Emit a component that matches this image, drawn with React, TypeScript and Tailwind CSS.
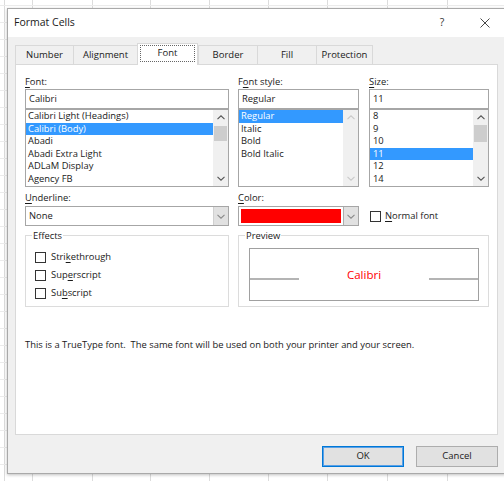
import React from "react";

const F = "font-['Open_Sans',sans-serif]";

function Chev({ down = false, color = "#606060" }: { down?: boolean; color?: string }) {
  return (
    <svg width="8" height="5" viewBox="0 0 8 5" className="block">
      <path
        d={down ? "M0.5 0.8L4 4.2L7.5 0.8" : "M0.5 4.2L4 0.8L7.5 4.2"}
        fill="none"
        stroke={color}
        strokeWidth="1.1"
      />
    </svg>
  );
}

function ScrollBar({ thumbClass, disabled }: { thumbClass?: string; disabled?: boolean }) {
  const c = disabled ? "#c9c9c9" : "#555555";
  return (
    <div className="w-[15px] self-stretch bg-[#f0f0f0] flex flex-col shrink-0">
      <div className="h-[15px] flex items-center justify-center">
        <Chev color={c} />
      </div>
      <div className="flex-1">{thumbClass && <div className={`mx-[1px] bg-[#cdcdcd] ${thumbClass}`} />}</div>
      <div className="h-[15px] flex items-center justify-center">
        <Chev down color={c} />
      </div>
    </div>
  );
}

function ListBox({
  items,
  selected,
  thumbClass,
  disabled,
  pad = "pl-[2px]",
}: {
  items: string[];
  selected: number;
  thumbClass?: string;
  disabled?: boolean;
  pad?: string;
}) {
  return (
    <div className="h-[78px] border border-[#a6a6a6] bg-white flex">
      <div className="flex-1 min-w-0 overflow-hidden">
        {items.map((it, i) => (
          <div
            key={i}
            className={`h-[12.5px] leading-[12.5px] whitespace-nowrap ${pad} ${
              i === selected ? "bg-[#3399ff] text-white" : ""
            }`}
          >
            {it}
          </div>
        ))}
      </div>
      <ScrollBar thumbClass={thumbClass} disabled={disabled} />
    </div>
  );
}

function TextBox({ value, pad = "pl-[3px]" }: { value: string; pad?: string }) {
  return (
    <div className={`h-[20px] border border-[#a6a6a6] bg-white flex items-center ${pad}`}>{value}</div>
  );
}

function Check() {
  return <div className="w-[11px] h-[11px] border border-[#333333] bg-white shrink-0" />;
}

function U({ children }: { children: React.ReactNode }) {
  return <span className="underline underline-offset-[1.5px] decoration-[0.8px]">{children}</span>;
}

function Label({ children }: { children: React.ReactNode }) {
  return <div className="h-[15px] leading-[15px] whitespace-nowrap">{children}</div>;
}

const tabs = [
  { label: "Number", w: "w-[58px]" },
  { label: "Alignment", w: "w-[64px]" },
  { label: "Font", w: "w-[61px]", active: true },
  { label: "Border", w: "w-[59px]" },
  { label: "Fill", w: "w-[59px]" },
  { label: "Protection", w: "w-[57px]", last: true },
];

function Dialog() {
  return (
    <div className="absolute left-[7px] top-[8px] w-[499px] h-[466px] border border-[#a9a9a9] bg-[#f0f0f0] flex flex-col shadow-[0_1px_3px_rgba(0,0,0,0.25)]">
      {/* Title bar */}
      <div className="h-[28px] bg-white flex items-center shrink-0">
        <div className="pl-[6px] text-[10.5px] text-[#1a1a1a]">Format Cells</div>
        <div className="ml-auto w-[20px] text-center text-[10.5px] text-[#333] mr-[13px]">?</div>
        <div className="w-[40px] h-full flex items-center justify-center">
          <svg width="10" height="10" viewBox="0 0 10 10">
            <path d="M0.5 0.5L9.5 9.5M9.5 0.5L0.5 9.5" stroke="#333" strokeWidth="0.9" />
          </svg>
        </div>
      </div>

      {/* Tabs */}
      <div className="mt-[6px] h-[21px] flex items-end pl-[7px] shrink-0 text-[9.5px]">
        {tabs.map((t) =>
          t.active ? (
            <div
              key={t.label}
              className={`${t.w} h-[22px] -mb-px relative z-10 bg-white border-t border-l border-r border-[#d9d9d9] flex items-center justify-center`}
            >
              <div className="absolute left-[2px] right-[2px] top-[1px] bottom-[3px] border border-dotted border-[#666]" />
              <span className="-mt-[2px]">{t.label}</span>
            </div>
          ) : (
            <div
              key={t.label}
              className={`${t.w} h-[19px] bg-[#f0f0f0] border-t border-l border-[#d9d9d9] ${
                t.last ? "border-r" : ""
              } flex items-center justify-center`}
            >
              {t.label}
            </div>
          )
        )}
      </div>

      {/* Panel */}
      <div className="mx-[7px] h-[371px] shrink-0 bg-white border border-[#d9d9d9] pt-[9px] pl-[9px] pr-[8px] flex flex-col text-[9.4px]">
        {/* Row 1 */}
        <div className="flex">
          <div className="w-[204px]">
            <Label>
              <U>F</U>ont:
            </Label>
            <TextBox value="Calibri" />
            <ListBox
              items={["Calibri Light (Headings)", "Calibri (Body)", "Abadi", "Abadi Extra Light", "ADLaM Display", "Agency FB"]}
              selected={1}
              thumbClass="mt-[1px] h-[15px]"
            />
          </div>
          <div className="w-[121px] ml-[9px]">
            <Label>
              F<U>o</U>nt style:
            </Label>
            <TextBox value="Regular" />
            <ListBox items={["Regular", "Italic", "Bold", "Bold Italic"]} selected={0} disabled />
          </div>
          <div className="w-[120px] ml-[10px]">
            <Label>
              <U>S</U>ize:
            </Label>
            <TextBox value="11" />
            <ListBox
              items={["8", "9", "10", "11", "12", "14"]}
              selected={3}
              thumbClass="h-[17px]"
              pad="pl-[3px]"
            />
          </div>
        </div>

        {/* Row 2 */}
        <div className="flex mt-[3px]">
          <div className="w-[204px]">
            <div className="h-[16px] leading-[15px]">
              <U>U</U>nderline:
            </div>
            <div className="h-[20px] border border-[#a6a6a6] bg-white flex items-center">
              <div className="flex-1 pl-[3px]">None</div>
              <div className="w-[15px] h-full bg-[#e1e1e1] border-l border-[#d0d0d0] flex items-center justify-center">
                <Chev down color="#8a8a8a" />
              </div>
            </div>
          </div>
          <div className="w-[121px] ml-[9px]">
            <div className="h-[16px] leading-[15px]">
              <U>C</U>olor:
            </div>
            <div className="h-[20px] border border-[#a6a6a6] bg-white flex items-center">
              <div className="flex-1 h-full p-[2px] pr-[2px]">
                <div className="w-full h-full bg-[#ff0000]" />
              </div>
              <div className="w-[15px] h-full bg-[#e1e1e1] border-l border-[#adadad] flex items-center justify-center">
                <Chev down color="#8a8a8a" />
              </div>
            </div>
          </div>
          <div className="w-[120px] ml-[10px] pt-[20px] pl-[1px] flex items-start">
            <div className="flex items-center h-[12px]">
              <Check />
              <span className="ml-[4px]">
                <U>N</U>ormal font
              </span>
            </div>
          </div>
        </div>

        {/* Row 3: group boxes */}
        <div className="flex mt-[9px]">
          <div className="w-[204px] h-[72px] border border-[#dcdcdc] relative pt-[12px] pl-[9px]">
            <div className="absolute -top-[8px] left-[6px] bg-white px-[1px] leading-[15px]">Effects</div>
            {[
              <>
                Stri<U>k</U>ethrough
              </>,
              <>
                Sup<U>e</U>rscript
              </>,
              <>
                Su<U>b</U>script
              </>,
            ].map((t, i) => (
              <div key={i} className="h-[18px] flex items-center">
                <Check />
                <span className="ml-[5px]">{t}</span>
              </div>
            ))}
          </div>
          <div className="w-[251px] ml-[9px] h-[72px] border border-[#dcdcdc] relative pt-[12px] pl-[10px] pr-[9px]">
            <div className="absolute -top-[8px] left-[6px] bg-white px-[1px] leading-[15px]">Preview</div>
            <div className="h-[53px] border border-[#a0a0a0] bg-white pt-[20px]">
              <div className="flex h-[12px] items-end">
                <div className="w-[49px] h-[2px] bg-[#b4b4b4] mb-[1px]" />
                <div className="flex-1 text-center text-[11.5px] leading-[12px] text-[#ff0000] self-center">Calibri</div>
                <div className="w-[49px] h-[2px] bg-[#b4b4b4] mb-[1px]" />
              </div>
            </div>
          </div>
        </div>

        <div className="mt-[31px] leading-[14px] whitespace-pre">
          This is a TrueType font.  The same font will be used on both your printer and your screen.
        </div>
      </div>

      {/* Buttons */}
      <div className="flex justify-end gap-[12px] pt-[11px] pr-[7px] text-[9.5px]">
        <div className="w-[82px] h-[21px] bg-[#e1e1e1] border border-[#0078d7] shadow-[inset_0_0_0_1px_#5aa0e6] flex items-center justify-center">
          OK
        </div>
        <div className="w-[82px] h-[21px] bg-[#e1e1e1] border border-[#adadad] flex items-center justify-center">
          Cancel
        </div>
      </div>
    </div>
  );
}

export default function App() {
  const gridV = [4, 32, 92, 150, 209, 268, 327, 387, 447];
  const gridH = Array.from({ length: 28 }, (_, k) => 5 + 17 * k);
  return (
    <div className={`relative w-[504px] h-[481px] overflow-hidden bg-white ${F} text-[#1a1a1a]`}>
      {gridV.map((x) => (
        <div key={x} className="absolute top-0 bottom-0 w-px bg-[#dcdcdc]" style={{ left: x }} />
      ))}
      {gridH.map((y) => (
        <div key={y} className="absolute left-0 right-0 h-px bg-[#ebebeb]" style={{ top: y }} />
      ))}
      <Dialog />
    </div>
  );
}
